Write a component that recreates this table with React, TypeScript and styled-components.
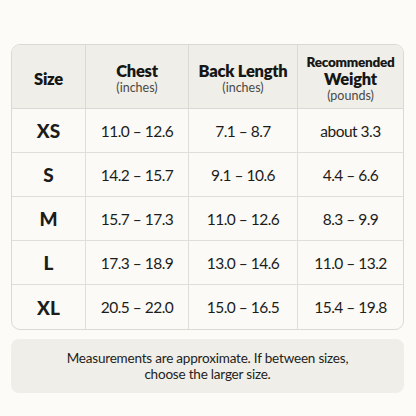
import React from "react";
import styled, { createGlobalStyle } from "styled-components";

const Global = createGlobalStyle`
  html, body { margin: 0; padding: 0; background: #fcfbf7; }
  body { font-family: Lato, "Open Sans", sans-serif; color: #1c1c1a; }
`;

const Page = styled.div`
  width: 416px;
  height: 416px;
  box-sizing: border-box;
  padding: 44px 12px 0 11px;
  display: flex;
  flex-direction: column;
  gap: 9px;
`;

const Table = styled.div`
  display: grid;
  grid-template-columns: 74px 103px 109px 1fr;
  grid-template-rows: 64px repeat(5, 44px);
  border: 1px solid #dbd9d2;
  border-radius: 9px;
  overflow: hidden;
  background: #fbfaf6;
`;

const HeadCell = styled.div<{ $last?: boolean }>`
  background: #efeee9;
  border-right: ${(p) => (p.$last ? "none" : "1px solid #dbd9d2")};
  border-bottom: 1px solid #dbd9d2;
  padding-top: 4px;
  display: flex;
  flex-direction: column;
  align-items: center;
  justify-content: center;
  text-align: center;
`;

const HeadTitle = styled.div<{ $small?: boolean }>`
  font-weight: 800;
  font-size: ${(p) => (p.$small ? "13.5px" : "16.5px")};
  line-height: ${(p) => (p.$small ? "15px" : "18px")};
  letter-spacing: -0.25px;
  color: #161614;
`;

const HeadUnit = styled.div`
  font-size: 12.5px;
  line-height: 14px;
  color: #4a4945;
  margin-top: 1px;
`;

const Cell = styled.div<{ $last?: boolean; $bottom?: boolean; $size?: boolean }>`
  border-right: ${(p) => (p.$last ? "none" : "1px solid #e0ded8")};
  border-bottom: ${(p) => (p.$bottom ? "none" : "1px solid #e0ded8")};
  display: flex;
  align-items: center;
  justify-content: center;
  font-size: ${(p) => (p.$size ? "19px" : "15.5px")};
  font-weight: ${(p) => (p.$size ? 900 : 400)};
  letter-spacing: ${(p) => (p.$size ? "0" : "-0.5px")};
  color: #1c1c1a;
`;

const Note = styled.div`
  background: #f0eee8;
  border-radius: 8px;
  height: 54px;
  display: flex;
  align-items: center;
  justify-content: center;
  text-align: center;
  font-size: 13.5px;
  letter-spacing: -0.2px;
  line-height: 16px;
  color: #222220;
`;

const rows = [
  ["XS", "11.0 – 12.6", "7.1 – 8.7", "about 3.3"],
  ["S", "14.2 – 15.7", "9.1 – 10.6", "4.4 – 6.6"],
  ["M", "15.7 – 17.3", "11.0 – 12.6", "8.3 – 9.9"],
  ["L", "17.3 – 18.9", "13.0 – 14.6", "11.0 – 13.2"],
  ["XL", "20.5 – 22.0", "15.0 – 16.5", "15.4 – 19.8"],
];

export default function App() {
  return (
    <>
      <Global />
      <Page>
        <Table>
          <HeadCell>
            <HeadTitle>Size</HeadTitle>
          </HeadCell>
          <HeadCell>
            <HeadTitle>Chest</HeadTitle>
            <HeadUnit>(inches)</HeadUnit>
          </HeadCell>
          <HeadCell>
            <HeadTitle>Back Length</HeadTitle>
            <HeadUnit>(inches)</HeadUnit>
          </HeadCell>
          <HeadCell $last>
            <HeadTitle $small>Recommended</HeadTitle>
            <HeadTitle>Weight</HeadTitle>
            <HeadUnit>(pounds)</HeadUnit>
          </HeadCell>
          {rows.map((r, i) =>
            r.map((v, j) => (
              <Cell
                key={`${i}-${j}`}
                $size={j === 0}
                $last={j === 3}
                $bottom={i === rows.length - 1}
              >
                {v}
              </Cell>
            ))
          )}
        </Table>
        <Note>
          Measurements are approximate. If between sizes,
          <br />
          choose the larger size.
        </Note>
      </Page>
    </>
  );
}
